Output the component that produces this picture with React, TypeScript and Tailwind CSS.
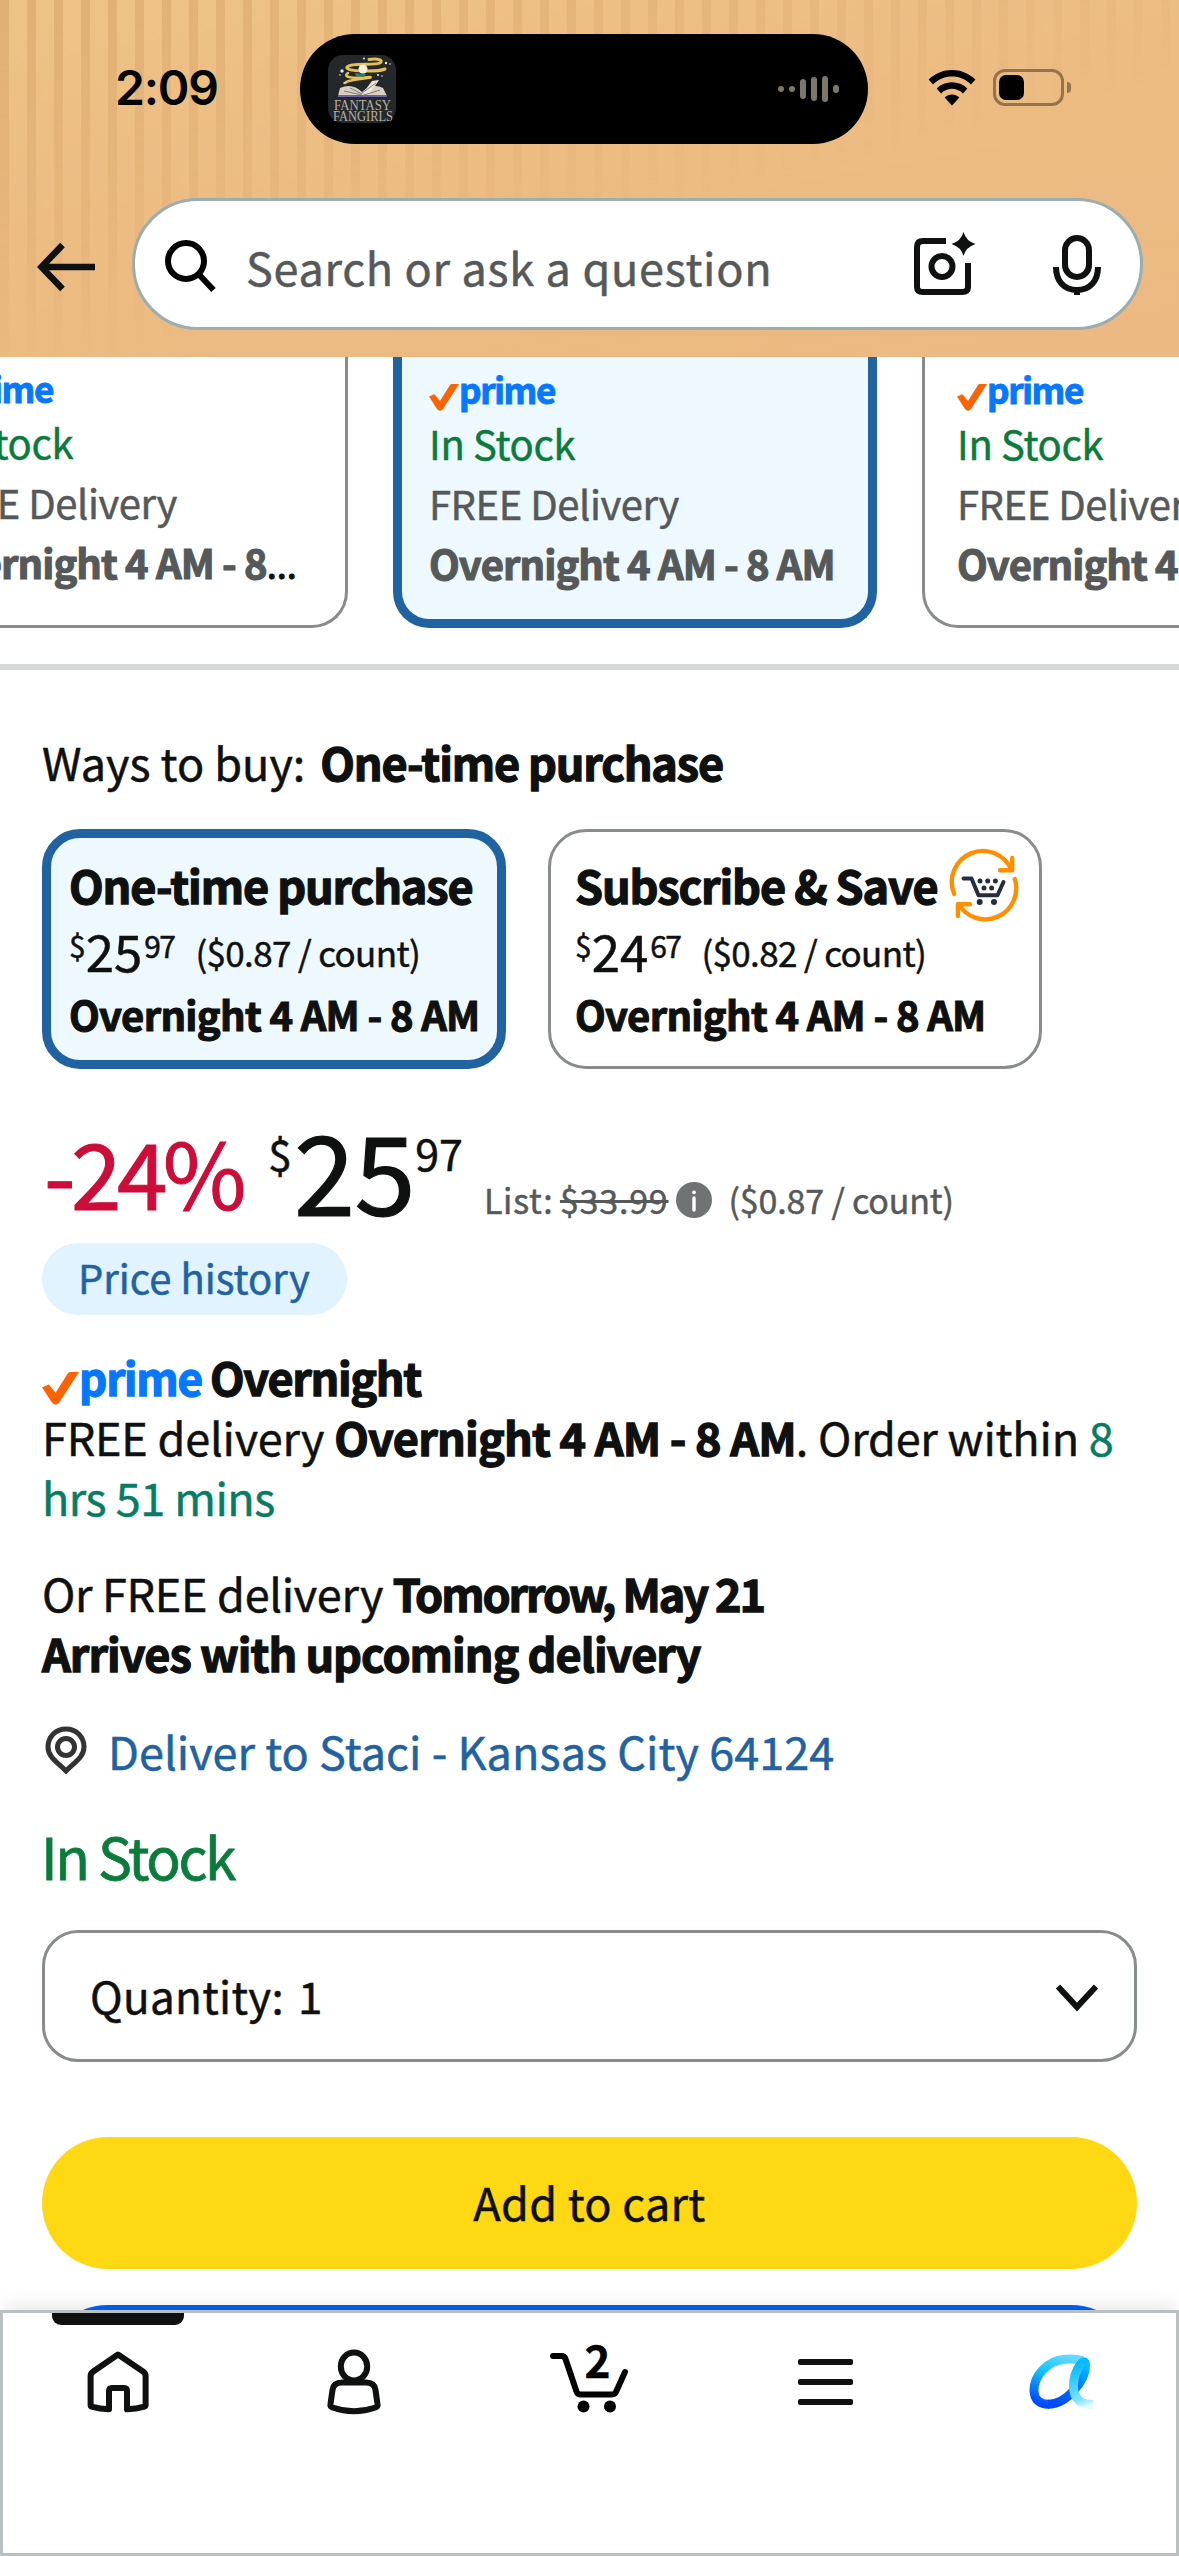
import type { ReactNode } from "react";

function StatusBar() {
  return (
    <div className="relative flex h-[178px] items-start">
      <div className="ml-[115px] mt-[58px] w-[185px] font-['Inter',sans-serif] text-[48px] font-semibold leading-[60px] tracking-[-1.2px] text-black [-webkit-text-stroke:0px]">
        2:09
      </div>
      <div className="mt-[34px] flex h-[110px] w-[568px] items-center justify-between rounded-full bg-black pl-[28px] pr-[29px]">
        <PodcastArt />
        <div className="flex items-center gap-[5px]">
          <i className="h-[6px] w-[6px] rounded-full bg-[#7d776b]" />
          <i className="h-[6px] w-[6px] rounded-full bg-[#7d776b]" />
          <i className="h-[20px] w-[6px] rounded-full bg-[#7d776b]" />
          <i className="h-[24px] w-[6px] rounded-full bg-[#7d776b]" />
          <i className="h-[26px] w-[6px] rounded-full bg-[#7d776b]" />
          <i className="h-[8px] w-[6px] rounded-full bg-[#7d776b]" />
        </div>
      </div>
      <svg className="ml-[60px] mt-[70px] h-[36px] w-[48px]" viewBox="0 0 48 36">
        <path d="M0.6 9.6C14 -3.2 34 -3.2 47.4 9.6L43 14.4C32 4 16 4 5 14.4Z" fill="#000" />
        <path d="M8.6 18.6C17 10.2 31 10.2 39.4 18.6L34.9 23.4C28.5 17.2 19.5 17.2 13.1 23.4Z" fill="#000" />
        <path d="M16.6 27.6C21 23.4 27 23.4 31.4 27.6L24 35.4Z" fill="#000" />
      </svg>
      <div className="ml-[17px] mt-[69px] flex items-center">
        <div className="h-[37px] w-[71px] rounded-[12px] border-[3px] border-[#94744d] p-[3px]">
          <div className="h-[25px] w-[25px] rounded-[7px] bg-black" />
        </div>
        <div className="ml-[3px] h-[11px] w-[4px] rounded-r-full bg-[#94744d]" />
      </div>
    </div>
  );
}

function PodcastArt() {
  return (
    <svg className="h-[68px] w-[68px] [-webkit-text-stroke:0px]" viewBox="0 0 68 68">
      <rect width="68" height="68" rx="15" fill="#25282a" />
      <g fill="none" stroke="#e6c055" strokeLinecap="round">
        <path d="M41 4.500C50 3 56 5 52 8C46 11 24 7 19 12C16 17 50 17 57 14" strokeWidth="3" />
        <path d="M20 18C14 22 24 24 42 22C47 23 20 24 17 28" strokeWidth="2.600" />
      </g>
      <path d="M27 18L38 19L36 22L28 21Z" fill="#2c7f68" />
      <circle cx="35" cy="14" r="4.500" fill="#f5efe0" />
      <path d="M12 33C20 29 28 31 34 37C40 31 48 29 55 33L59 41H10Z" fill="#d9cfc3" />
      <path d="M35 38L44 26L51 25L41 40" fill="#efe6d8" />
      <path d="M34 38L48 28M34 39L22 33M34 40L16 36M36 40L52 35" stroke="#77706a" strokeWidth="0.900" fill="none" />
      <path d="M10 41H59" stroke="#6c62a8" strokeWidth="2" />
      <g fill="#e8e8e8">
        <circle cx="14" cy="16" r="1.700" />
        <circle cx="12" cy="20" r="0.800" />
        <circle cx="36" cy="3.500" r="1" />
        <circle cx="58" cy="8" r="1.200" />
        <circle cx="62" cy="9" r="0.800" />
        <circle cx="50" cy="20" r="1" />
        <circle cx="54" cy="21" r="0.800" />
        <circle cx="16" cy="28" r="0.800" />
      </g>
      <text x="6" y="54.500" fontFamily="Liberation Serif, serif" fontSize="14" textLength="57" lengthAdjust="spacingAndGlyphs" fill="#b5afa6">
        FANTASY
      </text>
      <text x="5" y="65.500" fontFamily="Liberation Serif, serif" fontSize="14" textLength="60" lengthAdjust="spacingAndGlyphs" fill="#b5afa6">
        FANGIRLS
      </text>
    </svg>
  );
}

function SearchBar() {
  return (
    <div className="relative mt-[20px] flex items-center">
      <svg className="ml-[36px] mt-[6px] h-[52px] w-[60px]" viewBox="0 0 60 52" fill="none" stroke="#0f1111" strokeWidth="6.500">
        <path d="M59 26H7M26.500 4L5.500 26L26.500 48" />
      </svg>
      <div className="ml-[36px] flex h-[132px] w-[1011px] items-center rounded-full border-[3px] border-[#9aadb0] bg-white">
        <svg className="ml-[27px] mt-[4px] h-[56px] w-[56px]" viewBox="0 0 56 56" fill="none" stroke="#000" strokeWidth="6">
          <circle cx="24" cy="23" r="18" />
          <path d="M37 36.500L51.500 52" />
        </svg>
        <div className="ml-[28px] w-[666px] pt-[6px] text-[45px] leading-[60px] tracking-[0.7px] text-[#565959]">
          Search or ask a question
        </div>
        <svg className="h-[66px] w-[66px]" viewBox="0 0 66 66" fill="none" stroke="#0f1111" strokeWidth="6">
          <path d="M34 10H11Q5 10 5 16V56Q5 61 11 61H50Q56 61 56 56V32" />
          <circle cx="30" cy="35.500" r="10.500" />
          <path d="M51.500 1Q54 10 63.500 13Q54 16 51.500 25Q49 16 39.500 13Q49 10 51.500 1Z" fill="#0f1111" stroke="none" />
        </svg>
        <svg className="ml-[74px] mt-[2px] h-[62px] w-[50px]" viewBox="0 0 50 62" fill="none" stroke="#0f1111" strokeWidth="6">
          <rect x="13" y="4" width="24" height="39" rx="12" />
          <path d="M4 33C4 47 12 56 25 56C38 56 46 47 46 33M25 55V61" />
        </svg>
      </div>
    </div>
  );
}

function PrimeCheck({ className }: { className: string }) {
  return (
    <svg className={className} viewBox="0 0 30 27" preserveAspectRatio="none">
      <path d="M0 12.500L5.500 10.300L11 17L21 1Q21.800 0 23 0H30L14 25Q11 28.500 8 25Z" fill="#ff6200" />
    </svg>
  );
}

function OfferCard({
  frame,
  date,
  truncated,
}: {
  frame: string;
  date: string;
  truncated?: boolean;
}) {
  return (
    <div className={`flex h-[271px] shrink-0 flex-col justify-end whitespace-nowrap rounded-b-[36px] text-[40px] leading-[60px] ${frame}`}>
      <div className="flex h-[60px] shrink-0 items-start">
        <PrimeCheck className="mt-[31px] h-[27px] w-[30px]" />
        <span className="text-[35px] font-bold leading-[72px] tracking-[-1.3px] text-[#0578ff] [-webkit-text-stroke:1px]">prime</span>
      </div>
      <div className="tracking-[-0.34px] text-[#0b7b3c]">In Stock</div>
      <div className="tracking-[-0.46px] text-[#565959]">FREE Delivery</div>
      <div className="font-bold tracking-[-0.93px] text-[#565959] [-webkit-text-stroke:1.1px]">
        {date}
        {truncated && <span className="text-[36px] font-normal tracking-[0px] text-[#0f1111]">...</span>}
      </div>
    </div>
  );
}

function OfferCarousel() {
  return (
    <div className="-ml-[109px] flex gap-[45px]">
      <OfferCard frame="w-[457px] border-[3px] border-t-0 border-[#888c8c] pb-[32px] pl-[33px]" date="Overnight 4 AM - 8" truncated />
      <OfferCard frame="w-[484px] border-[9px] border-t-0 border-[#2162a1] bg-[#edf8ff] pb-[26px] pl-[27px]" date="Overnight 4 AM - 8 AM" />
      <OfferCard frame="w-[484px] border-[3px] border-t-0 border-[#888c8c] pb-[32px] pl-[32px]" date="Overnight 4 AM - 8 AM" />
    </div>
  );
}

function SubscribeIcon() {
  return (
    <svg className="-mt-[2px] ml-[14px] h-[67px] w-[67px] overflow-visible" viewBox="0 0 67 67" fill="none" strokeLinecap="round" strokeLinejoin="round">
      <g stroke="#ff8f00" strokeWidth="4.400">
        <path d="M3.200 41A31 31 0 0 1 60.500 17M61.200 5V17.300H49" />
        <path d="M63.800 26A31 31 0 0 1 7.500 51M19 51.300H6.900V63" />
      </g>
      <path d="M12.500 25.500H20.500L27.500 42.300H46.500L52.500 29" stroke="#232f3e" strokeWidth="4" />
      <g fill="#232f3e">
        <circle cx="29" cy="28" r="2.500" />
        <circle cx="36.700" cy="28" r="2.500" />
        <circle cx="44.400" cy="28" r="2.500" />
        <circle cx="33" cy="35" r="2.500" />
        <circle cx="40.600" cy="35" r="2.500" />
        <circle cx="28.700" cy="49" r="3" />
        <circle cx="43" cy="49" r="3" />
      </g>
    </svg>
  );
}

function BuyOption({
  frame,
  title,
  dollars,
  cents,
  unit,
  icon,
}: {
  frame: string;
  title: string;
  dollars: string;
  cents: string;
  unit: string;
  icon?: ReactNode;
}) {
  return (
    <div className={`h-[240px] whitespace-nowrap rounded-[38px] ${frame}`}>
      <div className="flex h-[60px] items-start text-[45px] font-bold leading-[60px] tracking-[-1.1px] [-webkit-text-stroke:1.3px]">
        {title}
        {icon}
      </div>
      <div className="flex h-[69px] items-start">
        <span className="mt-[15px] text-[30px] leading-[30px]">$</span>
        <span className="mt-[10px] text-[51px] leading-[51px]">{dollars}</span>
        <span className="ml-[2px] mt-[15px] text-[30px] leading-[30px] tracking-[-1.6px]">{cents}</span>
        <span className="ml-[21px] mt-[19px] text-[35px] leading-[35px] tracking-[-0.65px]">{unit}</span>
      </div>
      <div className="text-[40px] font-bold leading-[60px] tracking-[-0.7px] [-webkit-text-stroke:1.1px]">Overnight 4 AM - 8 AM</div>
    </div>
  );
}

function PriceRow() {
  return (
    <div className="mt-[44px] flex h-[130px] items-start whitespace-nowrap">
      <span className="ml-[2px] mt-[12px] w-[224px] text-[91px] leading-[91px] tracking-[-4.6px] text-[#cc0c39] [-webkit-text-stroke:1px]">-24%</span>
      <span className="mt-[18px] text-[43px] leading-[43px]">$</span>
      <span className="ml-[2px] text-[110px] leading-[110px] tracking-[-0.4px] [-webkit-text-stroke:1.2px]">25</span>
      <span className="mt-[18px] text-[43px] leading-[43px]">97</span>
      <div className="ml-[21px] mt-[70px] flex items-start text-[34px] leading-[34px] text-[#565959]">
        <span className="w-[76px] tracking-[0.72px]">List:</span>
        <span className="tracking-[0.8px] line-through decoration-[3px]">$33.99</span>
        <svg className="ml-[7px] -mt-[1px] h-[36px] w-[36px]" viewBox="0 0 36 36">
          <circle cx="18" cy="18" r="18" fill="#6f7373" />
          <circle cx="18" cy="10.300" r="1.900" fill="#fff" />
          <path d="M18 16V28" stroke="#fff" strokeWidth="3.400" strokeLinecap="round" />
        </svg>
        <span className="ml-[17px] tracking-[-0.17px]">($0.87 / count)</span>
      </div>
    </div>
  );
}

function Delivery() {
  return (
    <div className="whitespace-nowrap text-[45px] leading-[60px]">
      <div className="mt-[32px] flex items-start">
        <PrimeCheck className="mt-[25px] h-[33px] w-[37px]" />
        <span className="w-[131px] text-[44px] font-bold tracking-[-1.2px] text-[#0578ff] [-webkit-text-stroke:1.3px]">prime</span>
        <b className="tracking-[-1.38px] [-webkit-text-stroke:1.3px]">Overnight</b>
      </div>
      <div className="tracking-[-0.2px]">
        FREE delivery <b className="tracking-[-0.8px] [-webkit-text-stroke:1.3px]">Overnight 4 AM - 8 AM</b>. Order within <span className="text-[#067d62]">8</span>
      </div>
      <div className="tracking-[-0.5px] text-[#067d62]">hrs 51 mins</div>
      <div className="mt-[36px] tracking-[-0.3px]">
        Or FREE delivery <b className="tracking-[-2.1px] [-webkit-text-stroke:1.3px]">Tomorrow, May 21</b>
      </div>
      <div className="font-bold tracking-[-1px] [-webkit-text-stroke:1.3px]">Arrives with upcoming delivery</div>
      <div className="mt-[38px] flex items-start text-[#2162a1]">
        <svg className="ml-[3px] mr-[21px] mt-[5px] h-[48px] w-[42px]" viewBox="0 0 42 48" fill="none" stroke="#333" strokeWidth="5">
          <path d="M21 3C10.500 3 3 11 3 21C3 31 12 36 21 45C30 36 39 31 39 21C39 11 31.500 3 21 3Z" />
          <circle cx="21" cy="21" r="8.500" />
        </svg>
        <span className="tracking-[0.06px]">Deliver to Staci - Kansas City 64124</span>
      </div>
    </div>
  );
}

function NavBar() {
  return (
    <nav className="relative h-[246px] shrink-0 border-[3px] border-[#babfc2] bg-white shadow-[0_-6px_20px_-4px_rgba(15,17,17,0.12)]">
      <div className="absolute left-[49px] top-0 h-[12px] w-[132px] rounded-b-[9px] bg-[#0f1111]" />
      <div className="-mx-[3px] grid h-[150px] grid-cols-5 items-start justify-items-center pt-[32px]">
        <svg className="mt-[5px] h-[64px] w-[64px]" viewBox="0 0 64 64" fill="none" stroke="#0f1111" strokeWidth="6" strokeLinejoin="round">
          <path d="M32 4.500L57 21.500Q59.600 23.300 59.600 26V55Q59.600 56.200 58.400 56.600Q50 59 41 59.300V41Q41 38 38 38H26Q23 38 23 41V59.300Q14 59 5.600 56.600Q4.600 56.200 4.600 55V26Q4.600 23.300 7.200 21.500Z" />
        </svg>
        <svg className="mt-[4px] h-[66px] w-[60px]" viewBox="0 0 60 66" fill="none" stroke="#0f1111" strokeWidth="6" strokeLinejoin="round">
          <ellipse cx="30" cy="17.500" rx="13.200" ry="14" />
          <path d="M18 33.500H42Q50.500 33.500 51.500 41L53.500 55Q54 57.500 51.500 58.500Q30 66 8.500 58.500Q6 57.500 6.500 55L8.500 41Q9.500 33.500 18 33.500Z" />
        </svg>
        <div className="relative h-[70px] w-[80px]">
          <svg className="h-[70px] w-[80px]" viewBox="0 0 80 70" fill="none" stroke="#000" strokeWidth="6" strokeLinecap="round" strokeLinejoin="round">
            <path d="M4 11H12.500Q15.500 11 16.500 14L27.500 46.500Q28.600 49.500 31.500 49.500H63Q66 49.500 67.200 46.500L76 27" />
            <circle cx="34.500" cy="61.500" r="6" fill="#000" stroke="none" />
            <circle cx="61" cy="61.500" r="6" fill="#000" stroke="none" />
          </svg>
          <span className="absolute left-[35px] top-[-8px] text-[44px] font-bold leading-[44px] text-black">2</span>
        </div>
        <div className="mt-[14px] flex w-[55px] flex-col gap-[14px]">
          <i className="h-[6px] rounded-[2px] bg-[#0f1111]" />
          <i className="h-[6px] rounded-[2px] bg-[#0f1111]" />
          <i className="h-[6px] rounded-[2px] bg-[#0f1111]" />
        </div>
        <svg className="ml-[2px] mt-[5px] h-[64px] w-[74px]" viewBox="0 0 74 64" fill="none" strokeWidth="9">
          <defs>
            <linearGradient id="bowl" gradientUnits="userSpaceOnUse" x1="45" y1="6" x2="22" y2="56">
              <stop offset="0" stopColor="#66daff" />
              <stop offset="0.450" stopColor="#14c4ff" />
              <stop offset="1" stopColor="#004cff" />
            </linearGradient>
            <linearGradient id="stem" gradientUnits="userSpaceOnUse" x1="34" y1="54" x2="60" y2="16">
              <stop offset="0" stopColor="#004cff" />
              <stop offset="0.500" stopColor="#0070ff" />
              <stop offset="1" stopColor="#0abaff" />
            </linearGradient>
            <linearGradient id="tail" gradientUnits="userSpaceOnUse" x1="56" y1="14" x2="70" y2="54">
              <stop offset="0" stopColor="#0abaff" />
              <stop offset="0.550" stopColor="#5ad6ff" />
              <stop offset="0.800" stopColor="#84e4ff" />
              <stop offset="1" stopColor="#e6faff" />
            </linearGradient>
          </defs>
          <path d="M58 10.500C52 9 46 8.500 40 9.200C21 10.500 9 27 9 40C9 50 15 54.500 24 54.300" stroke="url(#bowl)" />
          <path d="M23 54.300C42 54.500 61 30 60.500 15" stroke="url(#stem)" />
          <path d="M60.500 15C60.500 5 48.500 20 48.500 36C48.500 48 55 55 68 54.500" stroke="url(#tail)" />
        </svg>
      </div>
    </nav>
  );
}

export default function App() {
  return (
    <div className="flex h-[2556px] w-[1179px] flex-col overflow-hidden bg-white font-['Noto_Sans_CJK_SC',sans-serif] text-[#0f1111] [-webkit-text-stroke:0.5px]">
      <header className="relative h-[357px] shrink-0 bg-[linear-gradient(170deg,#eec287_0%,#ecbc83_45%,#ebb981_100%)]">
        <div className="absolute inset-0 bg-[repeating-linear-gradient(90deg,rgba(190,130,70,0.28)_0px,rgba(190,130,70,0.28)_9px,transparent_9px,transparent_27px)] [mask-image:linear-gradient(165deg,black_0%,transparent_58%)]" />
        <StatusBar />
        <SearchBar />
      </header>
      <main className="min-h-0 flex-1 overflow-hidden">
        <OfferCarousel />
        <div className="mt-[36px] h-[6px] bg-[#d5d9d9]" />
        <section className="px-[42px]">
          <div className="mt-[62px] flex gap-[15px] text-[45px] leading-[60px]">
            <span>Ways to buy:</span>
            <b className="tracking-[-1.16px] [-webkit-text-stroke:1.3px]">One-time purchase</b>
          </div>
          <div className="mt-[37px] flex gap-[42px]">
            <BuyOption
              frame="w-[464px] border-[9px] border-[#2162a1] bg-[#edf8ff] pl-[18px] pt-[17px]"
              title="One-time purchase"
              dollars="25"
              cents="97"
              unit="($0.87 / count)"
            />
            <BuyOption
              frame="w-[494px] border-[3px] border-[#888c8c] pl-[24px] pt-[23px]"
              title="Subscribe & Save"
              dollars="24"
              cents="67"
              unit="($0.82 / count)"
              icon={<SubscribeIcon />}
            />
          </div>
          <PriceRow />
          <div className="h-[72px] w-[305px] rounded-full bg-[#e0f3ff] pl-[36px] text-[40px] leading-[68px] text-[#2162a1]">
            Price history
          </div>
          <Delivery />
          <div className="-ml-[1px] mt-[38px] text-[57px] leading-[72px] tracking-[-2.4px] text-[#0b7b3c] [-webkit-text-stroke:0.8px]">In Stock</div>
          <div className="mt-[39px] flex h-[132px] w-[1095px] items-center justify-between rounded-[36px] border-[3px] border-[#888c8c] pl-[45px] pr-[35px] text-[44px] leading-[60px]">
            <div className="flex gap-[14px] pb-[3px]">
              <span className="tracking-[0.3px]">Quantity:</span>
              <span>1</span>
            </div>
            <svg className="mt-[3px] h-[30px] w-[44px]" viewBox="0 0 44 30" fill="none" stroke="#0f1111" strokeWidth="6">
              <path d="M3 3.500L22 24L41 3.500" />
            </svg>
          </div>
          <div className="mt-[75px] h-[132px] w-[1095px] rounded-full bg-[#ffd814] text-center text-[45px] leading-[129px] tracking-[0.29px]">
            Add to cart
          </div>
          <div className="mt-[36px] h-[132px] w-[1095px] rounded-full bg-[#0062f5]" />
        </section>
      </main>
      <NavBar />
    </div>
  );
}
